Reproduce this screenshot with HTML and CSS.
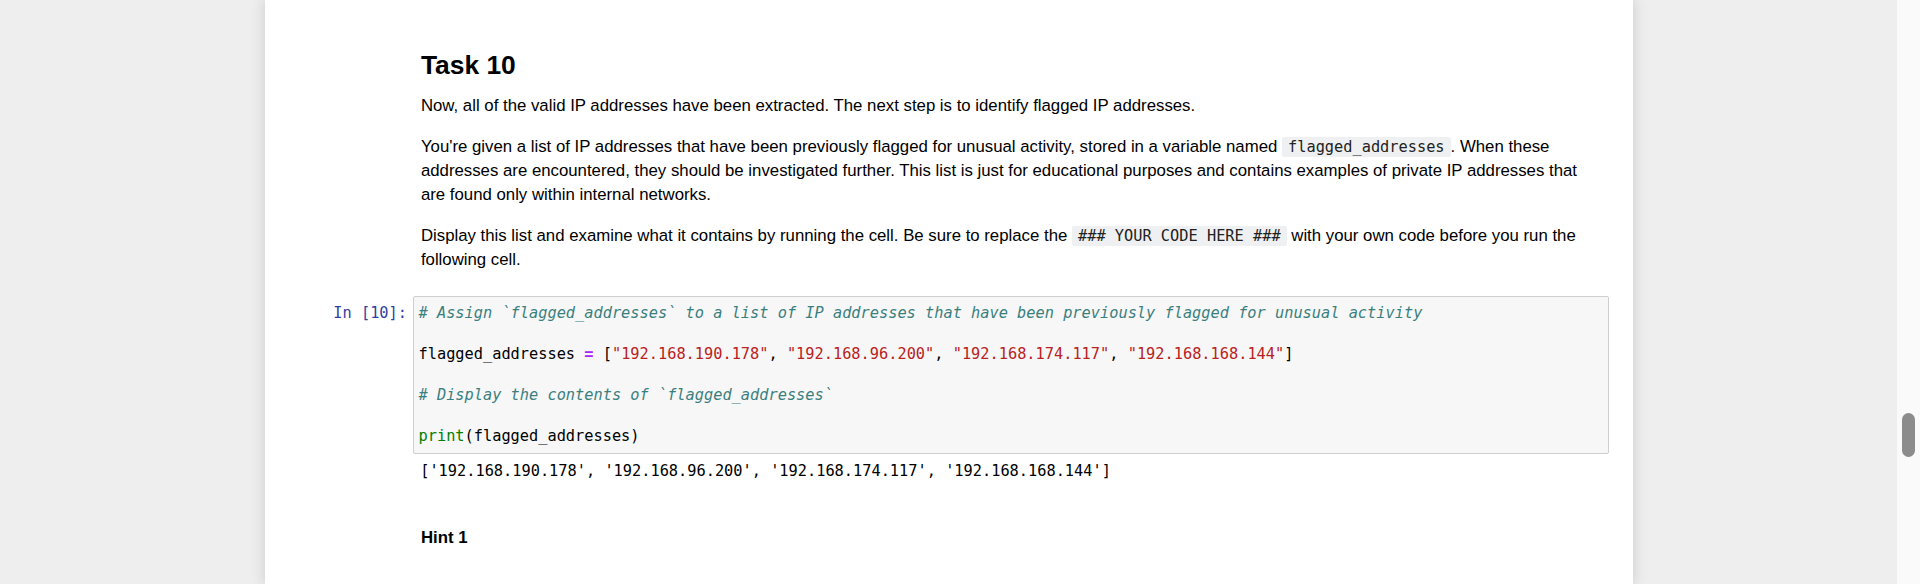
FILE: index.html
```html
<!DOCTYPE html>
<html lang="en">
<head>
<meta charset="utf-8">
<title>Task 10</title>
<link rel="stylesheet" href="styles.css">
</head>
<body>
<div class="app">
  <main class="site">
    <div class="notebook">
      <div class="cell text-cell">
        <div class="prompt"></div>
        <div class="md">
          <h2>Task 10</h2>
          <p>Now, all of the valid IP addresses have been extracted. The next step is to identify flagged IP addresses.</p>
          <p>You're given a list of IP addresses that have been previously flagged for unusual activity, stored in a variable named <code>flagged_addresses</code>. When these addresses are encountered, they should be investigated further. This list is just for educational purposes and contains examples of private IP addresses that are found only within internal networks.</p>
          <p>Display this list and examine what it contains by running the cell. Be sure to replace the <code>### YOUR CODE HERE ###</code> with your own code before you run the following cell.</p>
        </div>
      </div>

      <div class="cell code-cell">
        <div class="input">
          <div class="prompt in-prompt">In&nbsp;[10]:</div>
          <div class="editor"><pre class="code"><span class="c"># Assign `flagged_addresses` to a list of IP addresses that have been previously flagged for unusual activity</span>

flagged_addresses <span class="o">=</span> [<span class="s">"192.168.190.178"</span>, <span class="s">"192.168.96.200"</span>, <span class="s">"192.168.174.117"</span>, <span class="s">"192.168.168.144"</span>]

<span class="c"># Display the contents of `flagged_addresses`</span>

<span class="b">print</span>(flagged_addresses)</pre></div>
        </div>
        <div class="output">
          <div class="prompt"></div>
          <pre class="out">['192.168.190.178', '192.168.96.200', '192.168.174.117', '192.168.168.144']</pre>
        </div>
      </div>

      <div class="cell text-cell hint-cell">
        <div class="prompt"></div>
        <div class="md">
          <p class="hint">Hint 1</p>
        </div>
      </div>
    </div>
  </main>
  <div class="scrollbar"><div class="thumb"></div></div>
</div>
</body>
</html>
```
FILE: styles.css
```css
html, body {
  margin: 0;
  height: 100%;
  overflow: hidden;
  background: #eeeeee;
}

.app {
  display: flex;
  height: 584px;
}

.site {
  flex: 1;
  display: flex;
  justify-content: center;
  overflow: hidden;
}

.notebook {
  width: 1368px;
  flex: none;
  box-sizing: border-box;
  padding: 0 18px;
  background: #ffffff;
  box-shadow: 0 0 12px 1px rgba(87, 87, 87, 0.2);
  height: 100%;
}

.cell {
  display: flex;
  padding: 0 6px;
}

.prompt {
  width: 124px;
  flex: none;
  box-sizing: border-box;
}

.md {
  flex: 1;
  min-width: 0;
  padding: 0 8.4px;
  font-family: "Liberation Sans", Arial, Helvetica, sans-serif;
  font-size: 16.8px;
  line-height: 24px;
  color: #000000;
}

.text-cell:first-child .md {
  padding-top: 50.2px;
}

.md h2 {
  margin: 0 0 14.3px;
  font-size: 26.4px;
  line-height: 30px;
  font-weight: bold;
}

.md p {
  margin: 0 0 16.8px;
}

.md p:last-child {
  margin-bottom: 0;
}

.md code {
  font-family: "DejaVu Sans Mono", "Liberation Mono", monospace;
  font-size: 15.3px;
  line-height: 18px;
  background: #eff0f1;
  color: #222222;
  padding: 1px 6px;
  border-radius: 2px;
}

.code-cell {
  flex-direction: column;
  margin-top: 23.8px;
}

.input,
.output {
  display: flex;
}

.in-prompt {
  font-family: "DejaVu Sans Mono", "Liberation Mono", monospace;
  font-size: 15.3px;
  line-height: 20.4px;
  color: #303f9f;
  text-align: right;
  padding: 7.5px 5.5px 0 0;
}

.editor {
  flex: 1;
  min-width: 0;
  background: #f7f7f7;
  border: 1px solid #cfcfcf;
  border-radius: 2px;
  padding: 6.5px 5px 6.5px;
}

pre {
  margin: 0;
  font-family: "DejaVu Sans Mono", "Liberation Mono", monospace;
  font-size: 15.3px;
  line-height: 20.4px;
  color: #000000;
  white-space: pre;
}

.code .c {
  color: #3a7f7f;
  font-style: italic;
}

.code .s {
  color: #ba2121;
}

.code .o {
  color: #aa22ff;
  font-weight: bold;
}

.code .b {
  color: #008000;
}

.out {
  flex: 1;
  padding: 7.2px 0 0 7.7px;
}

.hint-cell .md {
  padding-top: 44.3px;
}

.md p.hint {
  font-weight: bold;
}

.scrollbar {
  width: 23px;
  flex: none;
  box-sizing: border-box;
  background: #fafafa;
  padding: 413px 0 0 5px;
}

.thumb {
  width: 13px;
  height: 44px;
  border-radius: 7px;
  background: #8c8c8c;
}
```
